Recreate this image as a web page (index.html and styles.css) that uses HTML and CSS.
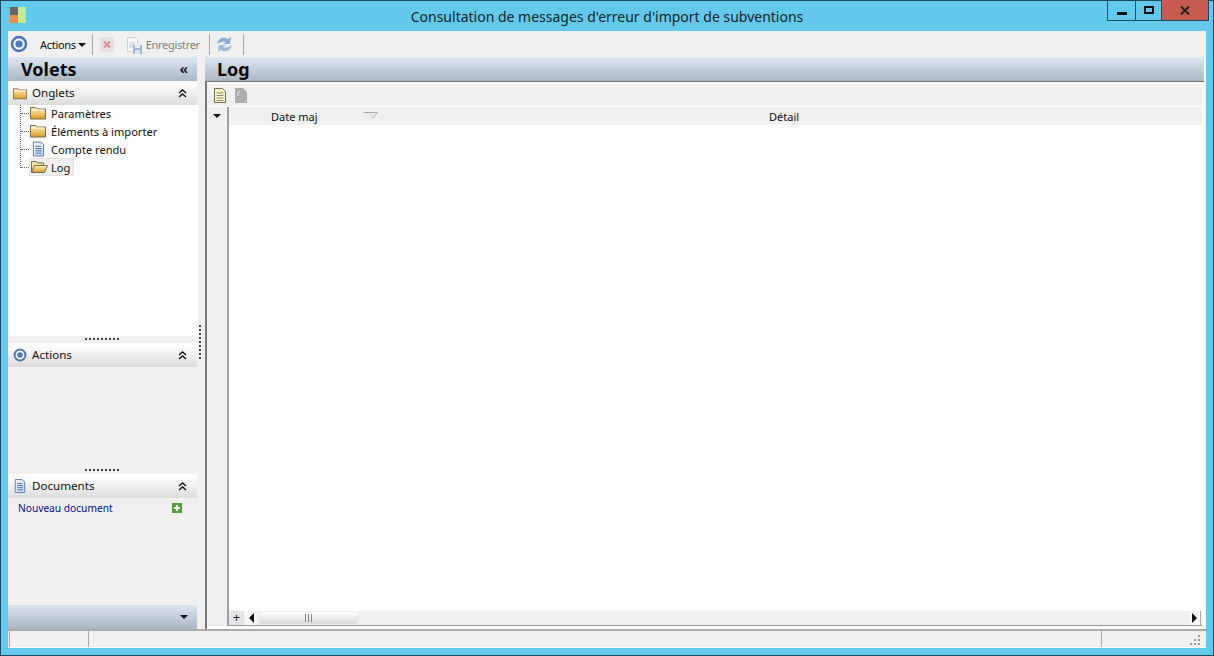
FILE: index.html
```html
<!DOCTYPE html>
<html lang="fr">
<head>
<meta charset="utf-8">
<title>Consultation de messages d'erreur d'import de subventions</title>
<link rel="stylesheet" href="styles.css">
</head>
<body>
<svg class="defs" width="0" height="0" aria-hidden="true">
  <defs>
    <linearGradient id="fg" x1="0" y1="0" x2="0" y2="1"><stop offset="0" stop-color="#fff4c0"/><stop offset="1" stop-color="#d99a25"/></linearGradient>
    <linearGradient id="dg" x1="0" y1="0" x2="1" y2="1"><stop offset="0" stop-color="#ffffff"/><stop offset="1" stop-color="#c5d6f2"/></linearGradient>
    <symbol id="folder" viewBox="0 0 16 14"><path d="M.5 3V1.5h5l1 1.5h9v10H.5z" fill="url(#fg)" stroke="#7c6c4a"/><path d="M1.5 4h13" stroke="#fffbe2"/></symbol>
    <symbol id="open" viewBox="0 0 18 14"><path d="M1.5 12.5V1.5h5l1 1.5h6v3" fill="#f5e6ae" stroke="#7c6c4a"/><path d="M1.5 12.5l3-7h13l-3 7z" fill="url(#fg)" stroke="#7c6c4a"/></symbol>
    <symbol id="doc" viewBox="0 0 14 16"><path d="M1.5.5h8l3 3v12h-11z" fill="url(#dg)" stroke="#4c6da8"/><path d="M3.5 5h6M3.5 7.5h7M3.5 10h7M3.5 12.5h7" stroke="#2f5fb5"/></symbol>
    <symbol id="target" viewBox="0 0 18 18"><circle cx="9" cy="9" r="7" fill="#f4f7fc" stroke="#4d75b8" stroke-width="2.5"/><circle cx="9" cy="9" r="3.6" fill="#4d7ac4"/></symbol>
    <symbol id="chev-up" viewBox="0 0 9 9"><path d="M1 4l3.5-3L8 4M1 8l3.5-3L8 8" fill="none" stroke="#111" stroke-width="1.4"/></symbol>
  </defs>
</svg>
<div class="window">
  <header class="titlebar">
    <svg class="app-logo" viewBox="0 0 16 16" width="16" height="16"><rect width="8" height="8" fill="#666"/><rect y="8" width="8" height="8" fill="#f08a4b"/><rect x="8" width="8" height="16" fill="#c4ea90"/></svg>
    <h1 class="title">Consultation de messages d'erreur d'import de subventions</h1>
    <div class="controls">
      <div class="ctl ctl-min"><i class="glyph-min"></i></div>
      <div class="ctl ctl-max"><i class="glyph-max"></i></div>
      <div class="ctl ctl-close"><svg viewBox="0 0 10 9" width="10" height="9"><path d="M1 .5l8 8M9 .5l-8 8" stroke="#222" stroke-width="2"/></svg></div>
    </div>
  </header>
  <div class="client">
    <div class="toolbar">
      <svg class="tb-target" width="18" height="18"><use href="#target"/></svg>
      <span class="tb-actions">Actions</span><i class="caret"></i>
      <span class="sep sep1"></span>
      <svg class="tb-del" viewBox="0 0 14 15" width="14" height="15"><rect width="14" height="15" fill="#e6e0e3"/><path d="M4 4.5l6 6M10 4.5l-6 6" stroke="#dc8d96" stroke-width="2"/></svg>
      <svg class="tb-save" viewBox="0 0 17 17" width="17" height="17"><path d="M1.5.5h7l3 3v11h-10z" fill="#f5f8fc" stroke="#c9d1dc"/><path d="M3 6h6M3 8h6M3 10h6" stroke="#bccae0"/><rect x="7" y="8" width="9" height="9" fill="#a6b7d3"/><rect x="9" y="8" width="5" height="3" fill="#e8edf5"/><rect x="9" y="13" width="5" height="4" fill="#dfe5ef"/></svg>
      <span class="tb-label">Enregistrer</span>
      <span class="sep sep2"></span>
      <svg class="tb-refresh" viewBox="0 0 17 17" width="17" height="17"><path d="M1 8C2 3 7 0 12 3l3-2-1 7H7l3-2C7 5 4 6 1 8z" fill="#86abd2"/><path d="M16 9c-1 5-6 8-11 5l-3 2 1-7h7l-3 2c3 1 6 0 9-2z" fill="#9dbcdb"/></svg>
      <span class="sep sep3"></span>
    </div>
    <div class="body">
      <aside class="panes">
        <div class="panes-head"><span class="panes-title">Volets</span><span class="dbl-left">«</span></div>
        <section class="pane pane-tabs">
          <div class="pane-head"><svg class="ph-icon" width="14" height="13"><use href="#folder"/></svg><span>Onglets</span><svg class="chev" width="9" height="9"><use href="#chev-up"/></svg></div>
          <div class="tree">
            <span class="tree-rail"></span>
            <div class="node"><i class="dots"></i><svg class="n-icon" width="16" height="14"><use href="#folder"/></svg><span class="n-text">Paramètres</span></div>
            <div class="node"><i class="dots"></i><svg class="n-icon" width="16" height="14"><use href="#folder"/></svg><span class="n-text">Éléments à importer</span></div>
            <div class="node"><i class="dots"></i><svg class="n-icon n-doc" width="13" height="16"><use href="#doc"/></svg><span class="n-text">Compte rendu</span></div>
            <div class="node node-sel"><i class="dots"></i><span class="sel"><svg class="n-icon n-open" width="18" height="14"><use href="#open"/></svg><span class="n-text">Log</span></span></div>
          </div>
        </section>
        <div class="grip"></div>
        <section class="pane pane-actions">
          <div class="pane-head"><svg class="ph-icon" width="14" height="14"><use href="#target"/></svg><span>Actions</span><svg class="chev" width="9" height="9"><use href="#chev-up"/></svg></div>
          <div class="pane-fill"></div>
        </section>
        <div class="grip"></div>
        <section class="pane pane-docs">
          <div class="pane-head"><svg class="ph-icon ph-doc" width="12" height="14"><use href="#doc"/></svg><span>Documents</span><svg class="chev" width="9" height="9"><use href="#chev-up"/></svg></div>
          <div class="doc-row"><a class="new-doc">Nouveau document</a><svg class="plus" viewBox="0 0 10 10" width="10" height="10"><rect width="10" height="10" fill="#4f9f3f"/><path d="M5 2v6M2 5h6" stroke="#fff" stroke-width="2"/></svg></div>
        </section>
        <div class="panes-foot"><i class="caret caret-foot"></i></div>
      </aside>
      <div class="splitter"><span class="split-dots"></span></div>
      <main class="main">
        <div class="main-head">Log</div>
        <div class="main-body">
          <div class="grid-tools">
            <svg class="gt-note" viewBox="0 0 12 15" width="12" height="15"><path d="M.5.5h8l3 3v11H.5z" fill="#fff7c4" stroke="#6d6d55"/><path d="M2.5 5h7M2.5 7.5h7M2.5 10h7M2.5 12.5h7" stroke="#8a8a70"/></svg>
            <svg class="gt-img" viewBox="0 0 12 15" width="12" height="15"><path d="M0 0h8l4 4v11H0z" fill="#adadad"/><path d="M2 6l3-3M2 7h2" stroke="#f4f4f4"/></svg>
          </div>
          <div class="grid">
            <div class="grid-gutter"><i class="caret caret-gutter"></i></div>
            <div class="grid-main">
              <div class="grid-header">
                <span class="col col-date">Date maj</span>
                <svg class="sort" viewBox="0 0 15 7" width="15" height="7"><path d="M.5.5h14L9 6.5" fill="#e9e9e9" stroke="#aaa"/></svg>
                <span class="col col-detail">Détail</span>
              </div>
              <div class="grid-rows"></div>
              <div class="hscroll">
                <span class="expand">+</span>
                <span class="sb-btn sb-left"><i class="tri-left"></i></span>
                <span class="thumb"><i class="thumb-lines"></i></span>
                <span class="sb-btn sb-right"><i class="tri-right"></i></span>
              </div>
            </div>
          </div>
        </div>
      </main>
    </div>
    <footer class="status">
      <span class="st st-a"></span>
      <span class="st st-b"></span>
      <span class="st st-c"><svg class="resize" viewBox="0 0 11 11" width="11" height="11"><path d="M8 0h2v2H8zM4 4h2v2H4zM8 4h2v2H8zM0 8h2v2H0zM4 8h2v2H4zM8 8h2v2H8z" fill="#999"/></svg></span>
    </footer>
  </div>
</div>
</body>
</html>
```
FILE: styles.css
```css
* { box-sizing: border-box; }
html, body { margin: 0; padding: 0; }
body { width: 1214px; height: 656px; overflow: hidden; font-family: "Noto Sans", "Liberation Sans", sans-serif; font-size: 11px; color: #111; }
.defs { position: absolute; }
.window { width: 1214px; height: 656px; display: flex; flex-direction: column; background: #62c9ec; border: 1px solid #1d4d63; }

.titlebar { height: 30px; flex: none; display: flex; align-items: flex-start; position: relative; }
.app-logo { margin: 6px 0 0 9px; }
.title { position: absolute; left: 0; right: 0; top: 6px; margin: 0; text-align: center; font-size: 14px; line-height: 19px; font-weight: 400; color: #14232b; }
.controls { margin-left: auto; margin-right: 4px; height: 21px; margin-top: -1px; display: flex; position: relative; border: 1px solid #1d4d63; border-top: 0; }
.ctl { height: 20px; display: flex; align-items: center; justify-content: center; }
.ctl-min { width: 28px; border-right: 1px solid #1d4d63; }
.ctl-max { width: 26px; border-right: 1px solid #1d4d63; }
.ctl-close { width: 46px; background: #c75b50; }
.glyph-min { display: block; width: 10px; height: 3px; background: #111; margin-top: 6px; }
.glyph-max { display: block; width: 10px; height: 8px; border: 2px solid #111; margin-top: -1px; }

.client { flex: 1; min-height: 0; margin: 0 7px 7px 7px; display: flex; flex-direction: column; background: #f0f0f0; }

.toolbar { height: 26px; flex: none; display: flex; align-items: center; background: #f0f0f0; padding-left: 2px; }
.tb-target { flex: none; }
.tb-actions { margin-left: 12px; font-size: 11px; letter-spacing: -0.3px; }
.caret { display: block; width: 0; height: 0; border-left: 4px solid transparent; border-right: 4px solid transparent; border-top: 4px solid #111; }
.toolbar .caret { margin-left: 2px; margin-top: 1px; }
.sep { display: block; width: 1px; height: 21px; background: #a8a8a8; flex: none; }
.sep1 { margin-left: 6px; }
.tb-del { margin-left: 7px; }
.tb-save { margin-left: 12px; margin-top: 3px; }
.tb-label { margin-left: 3px; color: #7f7f7f; font-size: 11px; letter-spacing: -0.3px; }
.sep2 { margin-left: 9px; }
.tb-refresh { margin-left: 6px; }
.sep3 { margin-left: 10px; }

.body { flex: 1; min-height: 0; display: flex; }
.panes { width: 189px; flex: none; display: flex; flex-direction: column; }
.panes-head { height: 24px; flex: none; display: flex; align-items: center; justify-content: space-between; padding: 0 9px 0 13px; background: linear-gradient(#dce7f2, #a9b6c3); }
.panes-title { font-size: 18px; font-weight: 700; line-height: 24px; color: #0b0b0b; }
.dbl-left { font-size: 15px; line-height: 20px; font-weight: 600; margin-top: -2px; }
.pane { display: flex; flex-direction: column; }
.pane-head { height: 24px; flex: none; display: flex; align-items: center; padding-left: 5px; font-size: 11.6px; background: linear-gradient(#ffffff 10%, #dcdcdc); position: relative; }
.pane-head > span { margin-left: 5px; margin-top: -2px; }
.chev { position: absolute; right: 10px; top: 8px; }
.ph-doc { margin-left: 1px; margin-right: 1px; }
.pane-tabs { height: 255px; flex: none; }
.tree { flex: 1; background: #fff; width: 190px; position: relative; }
.tree-rail { position: absolute; left: 12px; top: 0; height: 63px; border-left: 1px dotted #666; }
.node { height: 18px; display: flex; align-items: center; padding-left: 13px; margin-top: -1px; margin-bottom: 1px; }
.dots { display: block; width: 8px; border-top: 1px dotted #666; flex: none; margin-right: 1px; }
.n-icon { flex: none; }
.n-doc { margin-left: 2px; margin-right: 1px; }
.n-text { margin-left: 5px; font-size: 11.1px; white-space: nowrap; }
.sel { display: flex; align-items: center; height: 18px; background: #f0f0f0; padding-right: 3px; border: 1px solid #e4e4e4; margin-left: -1px; }
.sel .n-text { margin-left: 3px; }
.grip { height: 7px; flex: none; background: #f0f0f0; position: relative; }
.grip::after { content: ""; position: absolute; left: 77px; top: 2px; width: 35px; height: 2px; background: repeating-linear-gradient(90deg, #444 0 2px, transparent 2px 4px); }
.pane-actions { height: 124px; flex: none; }
.pane-fill { flex: 1; }
.pane-docs { flex: 1; min-height: 0; }
.doc-row { height: 20px; display: flex; align-items: center; justify-content: space-between; padding: 0 15px 0 10px; }
.new-doc { color: #000a9c; font-size: 10.2px; }
.panes-foot { height: 24px; flex: none; display: flex; justify-content: flex-end; align-items: center; padding-right: 9px; background: linear-gradient(#dce6f1, #a8b5c2); }

.splitter { width: 8px; flex: none; position: relative; }
.split-dots { position: absolute; left: 2px; top: 268px; width: 2px; height: 36px; background: repeating-linear-gradient(#444 0 2px, transparent 2px 4px); }

.main { flex: 1; min-width: 0; display: flex; flex-direction: column; background: #fff; }
.main-head { height: 25px; flex: none; font-size: 18px; font-weight: 700; line-height: 24px; padding-left: 12px; background: linear-gradient(#dce7f2, #a9b6c3); border-bottom: 1px solid #6f6f6f; margin-right: 2px; color: #0b0b0b; }
.main-body { flex: 1; min-height: 0; display: flex; flex-direction: column; border-left: 2px solid #777; padding: 2px 4px 3px 0; }
.grid-tools { height: 23px; flex: none; display: flex; align-items: center; background: #f0f0f0; border-bottom: 1px solid #fff; padding-left: 7px; }
.gt-note { flex: none; }
.gt-img { margin-left: 9px; flex: none; }
.grid { flex: 1; min-height: 0; display: flex; }
.grid-gutter { width: 22px; flex: none; background: #f0f0f0; border-right: 2px solid #a0a0a0; padding: 7px 0 0 6px; }
.grid-main { flex: 1; min-width: 0; display: flex; flex-direction: column; }
.grid-header { height: 18px; flex: none; background: #f0f0f0; position: relative; font-size: 11px; }
.col { position: absolute; top: 2px; line-height: 16px; }
.col-date { left: 42px; }
.col-detail { left: 540px; }
.sort { position: absolute; left: 134px; top: 5px; }
.grid-rows { flex: 1; min-height: 0; background: #fff; }
.hscroll { height: 15px; flex: none; display: flex; align-items: stretch; background: #efefef; border-bottom: 1px solid #999; }
.expand { width: 15px; flex: none; text-align: center; line-height: 13px; font-size: 13px; background: #e6e6e6; margin-right: 1px; }
.sb-btn { width: 12px; flex: none; display: flex; align-items: center; justify-content: center; background: #f7f7f7; }
.sb-right { margin-left: auto; margin-right: 1px; border-right: 1px solid #aaa; }
.tri-left, .tri-right { display: block; width: 0; height: 0; border-top: 5px solid transparent; border-bottom: 5px solid transparent; }
.tri-left { border-right: 5px solid #111; }
.tri-right { border-left: 5px solid #111; }
.thumb { width: 99px; flex: none; margin: 1px 0 1px 2px; border-radius: 4px; background: linear-gradient(#ffffff, #d8d8d8); position: relative; }
.thumb-lines { position: absolute; left: 46px; top: 2px; width: 7px; height: 8px; background: repeating-linear-gradient(90deg, #888 0 1px, transparent 1px 3px); }

.status { height: 19px; flex: none; display: flex; border-top: 2px solid #ababab; border-bottom: 1px solid #fff; background: #f0f0f0; }
.st { display: block; height: 100%; border-left: 1px solid #ababab; position: relative; }
.st-a { width: 79px; margin-left: 1px; }
.st-b { width: 1013px; }
.st-c { flex: 1; }
.resize { position: absolute; right: 5px; top: 4px; }
```
